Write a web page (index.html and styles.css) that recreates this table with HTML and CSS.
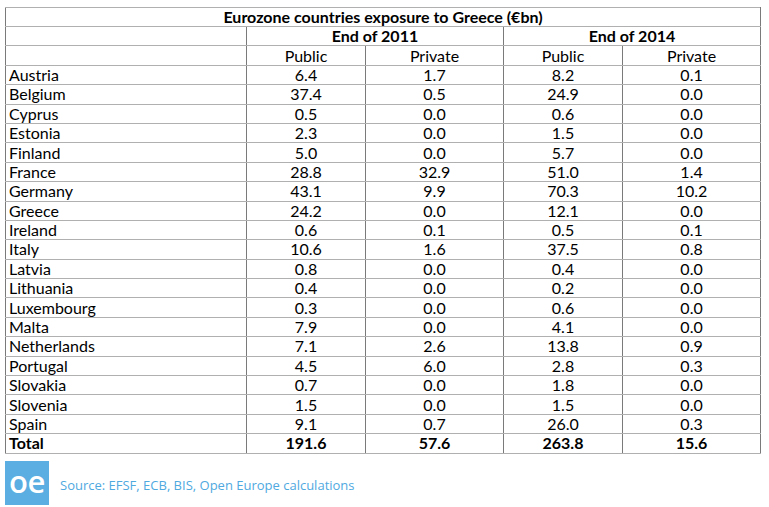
FILE: index.html
```html
<!DOCTYPE html>
<html>
<head>
<meta charset="utf-8">
<link rel="stylesheet" href="styles.css">
</head>
<body>
<div class="page">
<table class="grid">
<colgroup><col class="c-name"><col class="c-a"><col class="c-b"><col class="c-a"><col class="c-b"></colgroup>
<tr class="title"><td colspan="5">Eurozone countries exposure to Greece (€bn)</td></tr>
<tr class="head"><td></td><td colspan="2">End of 2011</td><td colspan="2">End of 2014</td></tr>
<tr class="sub"><td></td><td>Public</td><td>Private</td><td>Public</td><td>Private</td></tr>
<tr><td>Austria</td><td>6.4</td><td>1.7</td><td>8.2</td><td>0.1</td></tr>
<tr><td>Belgium</td><td>37.4</td><td>0.5</td><td>24.9</td><td>0.0</td></tr>
<tr><td>Cyprus</td><td>0.5</td><td>0.0</td><td>0.6</td><td>0.0</td></tr>
<tr><td>Estonia</td><td>2.3</td><td>0.0</td><td>1.5</td><td>0.0</td></tr>
<tr><td>Finland</td><td>5.0</td><td>0.0</td><td>5.7</td><td>0.0</td></tr>
<tr><td>France</td><td>28.8</td><td>32.9</td><td>51.0</td><td>1.4</td></tr>
<tr><td>Germany</td><td>43.1</td><td>9.9</td><td>70.3</td><td>10.2</td></tr>
<tr><td>Greece</td><td>24.2</td><td>0.0</td><td>12.1</td><td>0.0</td></tr>
<tr><td>Ireland</td><td>0.6</td><td>0.1</td><td>0.5</td><td>0.1</td></tr>
<tr><td>Italy</td><td>10.6</td><td>1.6</td><td>37.5</td><td>0.8</td></tr>
<tr><td>Latvia</td><td>0.8</td><td>0.0</td><td>0.4</td><td>0.0</td></tr>
<tr><td>Lithuania</td><td>0.4</td><td>0.0</td><td>0.2</td><td>0.0</td></tr>
<tr><td>Luxembourg</td><td>0.3</td><td>0.0</td><td>0.6</td><td>0.0</td></tr>
<tr><td>Malta</td><td>7.9</td><td>0.0</td><td>4.1</td><td>0.0</td></tr>
<tr><td>Netherlands</td><td>7.1</td><td>2.6</td><td>13.8</td><td>0.9</td></tr>
<tr><td>Portugal</td><td>4.5</td><td>6.0</td><td>2.8</td><td>0.3</td></tr>
<tr><td>Slovakia</td><td>0.7</td><td>0.0</td><td>1.8</td><td>0.0</td></tr>
<tr><td>Slovenia</td><td>1.5</td><td>0.0</td><td>1.5</td><td>0.0</td></tr>
<tr><td>Spain</td><td>9.1</td><td>0.7</td><td>26.0</td><td>0.3</td></tr>
<tr class="total"><td>Total</td><td>191.6</td><td>57.6</td><td>263.8</td><td>15.6</td></tr>
</table>
<div class="footer">
<div class="logo">oe</div>
<div class="source">Source: EFSF, ECB, BIS, Open Europe calculations</div>
</div>
</div>
</body>
</html>
```
FILE: styles.css
```css
html, body { margin: 0; padding: 0; background: #fff; }
.page { padding: 7px 0 0 5px; }
.grid {
  border-collapse: collapse;
  table-layout: fixed;
  width: 755px;
  font-family: Lato, "Liberation Sans", sans-serif;
  font-size: 16px;
  color: #000;
}
.c-name { width: 241px; }
.c-a { width: 119px; }
.c-b { width: 138px; }
.grid td {
  border-top: 1px solid #b0b0b0;
  border-bottom: 1px solid #b0b0b0;
  border-left: 1px solid #7a7a7a;
  border-right: 1px solid #7a7a7a;
  height: 18.4px;
  padding: 0;
  line-height: 18px;
  text-align: center;
  white-space: nowrap;
}
.grid td:first-child { text-align: left; padding-left: 3px; }
.grid .title td { font-weight: bold; text-align: center; padding-left: 0; height: 18px; }
.grid .head td { font-weight: bold; }
.grid .total td { font-weight: bold; }
.footer { display: flex; align-items: center; margin-top: 7px; }
.logo {
  width: 44px; height: 44px;
  background: #5aaee2;
  color: #fff;
  font-family: "Open Sans", "Liberation Sans", sans-serif;
  font-size: 31px;
  font-weight: 600;
  line-height: 40px;
  text-align: center;
  letter-spacing: -0.5px;
}
.source {
  margin-left: 11px;
  margin-top: 4px;
  font-family: "Open Sans", "Liberation Sans", sans-serif;
  font-size: 13px;
  color: #4fa9df;
}
```
